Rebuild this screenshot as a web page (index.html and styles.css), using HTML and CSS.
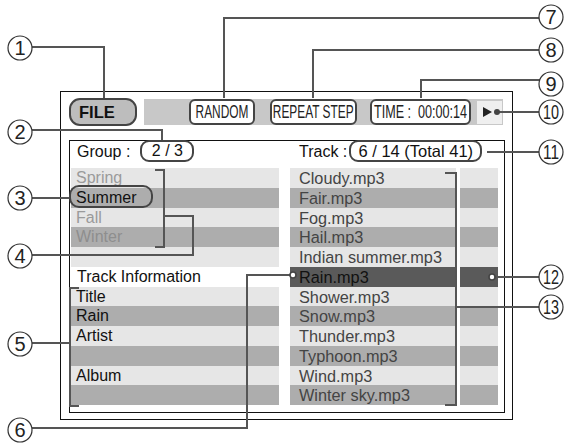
FILE: index.html
```html
<!DOCTYPE html>
<html>
<head>
<meta charset="utf-8">
<link rel="stylesheet" href="styles.css">
</head>
<body>
<div class="screen">
  <div class="topbar">
    <div class="file">FILE</div>
    <div class="bar">
      <div class="btn random"><span>RANDOM</span></div>
      <div class="btn repeat"><span>REPEAT STEP</span></div>
      <div class="btn time"><span>TIME :&nbsp; 00:00:14</span></div>
      <div class="play"><i class="tri"></i></div>
    </div>
  </div>
  <div class="inner">
    <div class="head">
      <div class="hl"><span>Group :</span><div class="pill pill-g">2 / 3</div></div>
      <div class="hr"><span>Track :</span><div class="pill pill-t">6 / 14 (Total 41)</div></div>
    </div>
    <div class="lists">
      <div class="col">
        <div class="row light dim">Spring</div>
        <div class="row dark">Summer</div>
        <div class="row light dim">Fall</div>
        <div class="row dark dim">Winter</div>
        <div class="row light"></div>
        <div class="row white">Track Information</div>
        <div class="row light">Title</div>
        <div class="row dark">Rain</div>
        <div class="row light">Artist</div>
        <div class="row dark"></div>
        <div class="row light">Album</div>
        <div class="row dark"></div>
      </div>
      <div class="col tracks">
        <div class="trow light"><div class="c1">Cloudy.mp3</div><div class="c2"></div></div>
        <div class="trow dark"><div class="c1">Fair.mp3</div><div class="c2"></div></div>
        <div class="trow light"><div class="c1">Fog.mp3</div><div class="c2"></div></div>
        <div class="trow dark"><div class="c1">Hail.mp3</div><div class="c2"></div></div>
        <div class="trow light"><div class="c1">Indian summer.mp3</div><div class="c2"></div></div>
        <div class="trow sel"><div class="c1">Rain.mp3</div><div class="c2"></div></div>
        <div class="trow light"><div class="c1">Shower.mp3</div><div class="c2"></div></div>
        <div class="trow dark"><div class="c1">Snow.mp3</div><div class="c2"></div></div>
        <div class="trow light"><div class="c1">Thunder.mp3</div><div class="c2"></div></div>
        <div class="trow dark"><div class="c1">Typhoon.mp3</div><div class="c2"></div></div>
        <div class="trow light"><div class="c1">Wind.mp3</div><div class="c2"></div></div>
        <div class="trow dark"><div class="c1">Winter sky.mp3</div><div class="c2"></div></div>
      </div>
    </div>
  </div>
</div>

<svg class="callouts" width="568" height="445" viewBox="0 0 568 445">
  <g class="ln">
    <path d="M32 47 H104 V98"/>
    <path d="M540 18 H224 V98"/>
    <path d="M540 50 H313 V98"/>
    <path d="M540 80 H421 V98"/>
    <path d="M497 112 H540"/>
    <path d="M32 130 H162 V140"/>
    <path d="M487 152 H540"/>
    <path d="M32 198 H70"/>
    <path d="M32 255 H193 V216 H164"/>
    <path d="M155 170 H164 V247 H155"/>
    <path d="M32 343 H69"/>
    <path d="M79 288 H70 V406 H79"/>
    <path d="M32 428 H247 V275 H290"/>
    <path d="M492 277 H540"/>
    <path d="M540 307 H456"/>
    <path d="M445 173 H456 V405 H445"/>
  </g>
  <rect class="hl-box" x="70" y="186" width="82" height="21" rx="9"/>
  <circle class="dot" cx="497" cy="112" r="3"/>
  <circle class="hdot" cx="293" cy="275" r="3"/>
  <circle class="hdot" cx="492" cy="277" r="3"/>
  <g class="num">
    <circle cx="20" cy="48" r="12"/><text x="20" y="55">1</text>
    <circle cx="20" cy="132" r="12"/><text x="20" y="139">2</text>
    <circle cx="20" cy="198" r="12"/><text x="20" y="205">3</text>
    <circle cx="20" cy="256" r="12"/><text x="20" y="263">4</text>
    <circle cx="20" cy="344" r="12"/><text x="20" y="351">5</text>
    <circle cx="20" cy="430" r="12"/><text x="20" y="437">6</text>
    <circle cx="551" cy="17" r="12"/><text x="551" y="24">7</text>
    <circle cx="551" cy="50" r="12"/><text x="551" y="57">8</text>
    <circle cx="551" cy="84" r="12"/><text x="551" y="91">9</text>
    <circle cx="551" cy="112" r="12"/><text x="551" y="119" textLength="16" lengthAdjust="spacingAndGlyphs">10</text>
    <circle cx="551" cy="152" r="12"/><text x="551" y="159" textLength="16" lengthAdjust="spacingAndGlyphs">11</text>
    <circle cx="551" cy="277" r="12"/><text x="551" y="284" textLength="16" lengthAdjust="spacingAndGlyphs">12</text>
    <circle cx="551" cy="307" r="12"/><text x="551" y="314" textLength="16" lengthAdjust="spacingAndGlyphs">13</text>
  </g>
</svg>
</body>
</html>
```
FILE: styles.css
```css
html, body {
  margin: 0;
  padding: 0;
}
body {
  width: 568px;
  height: 445px;
  position: relative;
  overflow: hidden;
  background: #fff;
  font-family: "Liberation Sans", Arial, sans-serif;
  color: #111;
}
.screen {
  margin: 91px 0 0 60px;
  width: 453px;
  height: 329px;
  box-sizing: border-box;
  border: 1px solid #111;
  padding: 6px 0 0 8px;
}
.topbar {
  display: flex;
  align-items: center;
  height: 28px;
}
.file {
  width: 68px;
  height: 28px;
  box-sizing: border-box;
  border: 2.5px solid #444;
  border-radius: 11px;
  background: #bdbdbd;
  font-weight: bold;
  font-size: 16.5px;
  display: flex;
  align-items: center;
  padding-left: 8px;
  color: #111;
}
.bar {
  margin-left: 7px;
  width: 359px;
  height: 26px;
  background: #c8c8c8;
  display: flex;
  align-items: center;
  padding-left: 45px;
  box-sizing: border-box;
}
.btn {
  height: 26px;
  box-sizing: border-box;
  border: 2px solid #444;
  border-radius: 6px;
  background: #fff;
  display: flex;
  align-items: center;
  justify-content: center;
  font-size: 18px;
  color: #222;
  overflow: visible;
}
.btn span {
  display: inline-block;
  white-space: nowrap;
  transform: scaleX(0.66);
}
.random { width: 66px; }
.repeat { width: 87px; margin-left: 15px; }
.time { width: 101px; margin-left: 13px; }
.time span { transform: scaleX(0.7); }
.play {
  width: 25px;
  height: 23px;
  margin-left: 6px;
  background: #efefef;
  display: flex;
  align-items: center;
  padding-left: 6px;
  box-sizing: border-box;
}
.tri {
  display: block;
  width: 0;
  height: 0;
  border-left: 9px solid #222;
  border-top: 5px solid transparent;
  border-bottom: 5px solid transparent;
}
.inner {
  margin-top: 14px;
  width: 436px;
  height: 273px;
  box-sizing: border-box;
  border: 1px solid #111;
  padding: 0 0 0 1px;
}
.head {
  display: flex;
  height: 21px;
  gap: 11px;
  font-size: 16px;
}
.hl, .hr {
  width: 208px;
  display: flex;
  align-items: center;
  box-sizing: border-box;
}
.hl { padding-left: 6px; }
.hr { padding-left: 9px; }
.pill {
  height: 22px;
  margin-top: -1px;
  box-sizing: border-box;
  border: 2px solid #444;
  border-radius: 9px;
  display: flex;
  align-items: center;
  justify-content: center;
  font-size: 16px;
}
.pill-g { width: 54px; margin-left: 10px; }
.pill-t { width: 133px; margin-left: 2px; font-size: 16.5px; }
.lists {
  display: flex;
  gap: 11px;
  margin-top: 6px;
}
.col { width: 208px; }
.row {
  height: 19.75px;
  line-height: 20px;
  font-size: 16px;
  padding-left: 5px;
  white-space: nowrap;
}
.light { background: #e6e6e6; }
.dark { background: #adadad; }
.white { background: #fff; padding-left: 6px; }
.dim { color: #9a9a9a; }
.dark.dim { color: #8e8e8e; }
.trow {
  display: flex;
  height: 19.75px;
  line-height: 20px;
  font-size: 16.3px;
  background: transparent !important;
}
.trow .c1 {
  width: 166px;
  padding-left: 9px;
  box-sizing: border-box;
  color: #444;
  white-space: nowrap;
}
.trow .c2 {
  width: 38px;
  margin-left: 4px;
}
.trow.light .c1, .trow.light .c2 { background: #e6e6e6; }
.trow.dark .c1, .trow.dark .c2 { background: #adadad; }
.trow.sel .c1, .trow.sel .c2 { background: #5a5a5a; }
.trow.sel .c1 { color: #111; }
.callouts {
  position: absolute;
  top: 0;
  left: 0;
  pointer-events: none;
}
.ln path {
  fill: none;
  stroke: #555;
  stroke-width: 2;
}
.hl-box {
  fill: none;
  stroke: #444;
  stroke-width: 2;
}
.dot { fill: #444; }
.hdot { fill: #fff; stroke: #444; stroke-width: 1.6; }
.num circle {
  fill: #fff;
  stroke: #333;
  stroke-width: 1.2;
}
.num text {
  font-family: "Liberation Sans", Arial, sans-serif;
  font-size: 20px;
  fill: #222;
  text-anchor: middle;
}
```
